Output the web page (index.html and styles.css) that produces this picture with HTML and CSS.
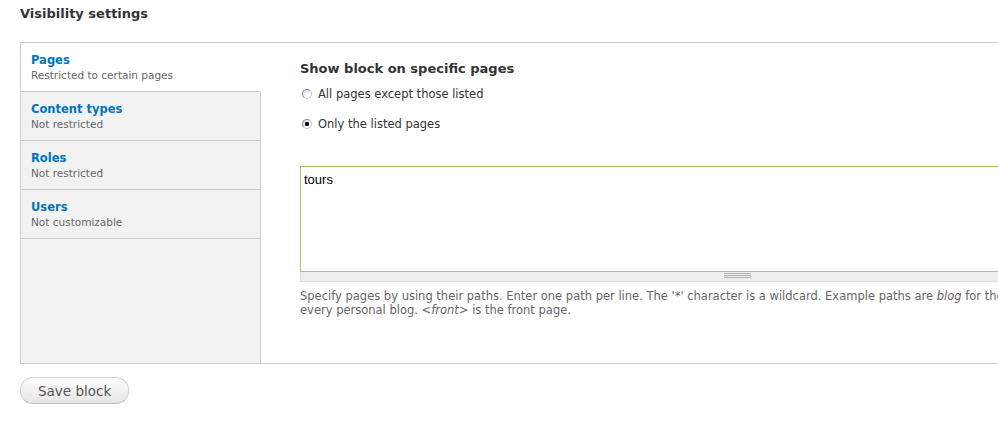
FILE: index.html
```html
<!DOCTYPE html>
<html lang="en">
<head>
    <meta charset="UTF-8">
    <title>Visibility settings</title>
    <link rel="stylesheet" href="styles.css">
</head>
<body>
    <div class="page">
        <h2 class="section-title">Visibility settings</h2>

        <div class="vertical-tabs">
            <div class="tabs-menu">
                <ul class="tab-list">
                    <li class="tab active">
                        <a href="#pages" class="tab-title">Pages</a>
                        <span class="tab-summary">Restricted to certain pages</span>
                    </li>
                    <li class="tab">
                        <a href="#types" class="tab-title">Content types</a>
                        <span class="tab-summary">Not restricted</span>
                    </li>
                    <li class="tab">
                        <a href="#roles" class="tab-title">Roles</a>
                        <span class="tab-summary">Not restricted</span>
                    </li>
                    <li class="tab">
                        <a href="#users" class="tab-title">Users</a>
                        <span class="tab-summary">Not customizable</span>
                    </li>
                </ul>
                <div class="tabs-filler"></div>
            </div>

            <div class="tab-pane" id="pages">
                <h3 class="pane-title">Show block on specific pages</h3>
                <label class="radio-row">
                    <input type="radio" name="visibility" value="0">
                    All pages except those listed
                </label>
                <label class="radio-row">
                    <input type="radio" name="visibility" value="1" checked>
                    Only the listed pages
                </label>

                <div class="textarea-wrap">
                    <textarea class="pages-input" rows="6">tours</textarea>
                    <div class="grippie"></div>
                </div>
                <div class="description">
                    Specify pages by using their paths. Enter one path per line. The '*' character is a wildcard. Example paths are <em>blog</em> for the blog page and <em>blog/*</em> for every personal blog. <em>&lt;front&gt;</em> is the front page.
                </div>
            </div>
        </div>

        <button class="save-button">Save block</button>
    </div>
</body>
</html>
```

FILE: styles.css
```css
html, body {
    overflow: hidden;
}
body {
    margin: 0;
    font-family: "DejaVu Sans", Verdana, sans-serif;
    color: #333;
}
.page {
    width: 1200px;
    padding: 5px 20px 0 20px;
}
.section-title {
    margin: 0 0 19px 0;
    font-size: 13px;
    line-height: 18px;
    font-weight: bold;
    color: #333;
}

/* vertical tabs */
.vertical-tabs {
    display: flex;
    border: 1px solid #ccc;
}
.tabs-menu {
    flex: 0 0 240px;
    display: flex;
    flex-direction: column;
    background-color: #f2f2f2;
}
.tab-list {
    list-style: none;
    margin: 0;
    padding: 0;
}
.tab {
    padding: 9px 10px;
    border-bottom: 1px solid #ccc;
    border-right: 1px solid #ccc;
    background-color: #f2f2f2;
}
.tab.active {
    background-color: #fff;
    border-right-color: #fff;
}
.tab-title {
    display: block;
    font-size: 11.5px;
    line-height: 16px;
    font-weight: bold;
    color: #0074bd;
    text-decoration: none;
}
.tab-summary {
    display: block;
    font-size: 10.5px;
    line-height: 14px;
    color: #666;
}
.tabs-filler {
    flex: 1;
    border-right: 1px solid #ccc;
}

.tab-pane {
    flex: 1;
    min-width: 0;
    padding: 17px 20px 46px 39px;
}
.pane-title {
    margin: 0;
    font-size: 13px;
    line-height: 18px;
    font-weight: bold;
    color: #333;
}
.radio-row {
    display: flex;
    align-items: center;
    font-size: 11.5px;
    line-height: 16px;
    color: #333;
    margin-top: 8px;
}
.radio-row + .radio-row {
    margin-top: 14px;
}
.radio-row input {
    appearance: none;
    flex: 0 0 auto;
    width: 10px;
    height: 10px;
    margin: 0 6px 0 2px;
    border: 1px solid #8a8a8a;
    border-right-color: #c4c4c4;
    border-bottom-color: #c4c4c4;
    border-radius: 50%;
    background: linear-gradient(135deg, #dcdcdc, #fff 70%);
}
.radio-row input:checked {
    background: radial-gradient(circle, #111 0, #111 2px, transparent 2.5px), linear-gradient(135deg, #dcdcdc, #fff 70%);
}

.textarea-wrap {
    margin-top: 34px;
    width: 876px;
}
.pages-input {
    display: block;
    box-sizing: border-box;
    width: 100%;
    height: 106px;
    margin: 0;
    padding: 5px 3px;
    border: 1px solid #c6b47c;
    border-top-color: #bda964;
    font-family: "Liberation Sans", Arial, sans-serif;
    font-size: 13px;
    line-height: 16px;
    color: #000;
    resize: none;
    outline: none;
}
.grippie {
    position: relative;
    height: 9px;
    background-color: #eee;
    border: 1px solid #ddd;
    border-top: 0;
}
.grippie::after {
    content: "";
    position: absolute;
    left: 50%;
    top: 1px;
    width: 27px;
    height: 5px;
    margin-left: -14px;
    background: repeating-linear-gradient(#b0b0b0 0, #b0b0b0 1px, transparent 1px, transparent 2px);
}
.description {
    width: 876px;
    margin-top: 7px;
    font-size: 11.5px;
    line-height: 14px;
    color: #666;
}

.save-button {
    margin-top: 13px;
    height: 27px;
    padding: 0 17px;
    border: 1px solid #d0d0d0;
    border-bottom-color: #bdbdbd;
    border-radius: 13px;
    background: linear-gradient(#fdfdfd, #e6e6e6);
    font-family: "DejaVu Sans", Verdana, sans-serif;
    font-size: 13.5px;
    color: #555;
    cursor: pointer;
}
```
